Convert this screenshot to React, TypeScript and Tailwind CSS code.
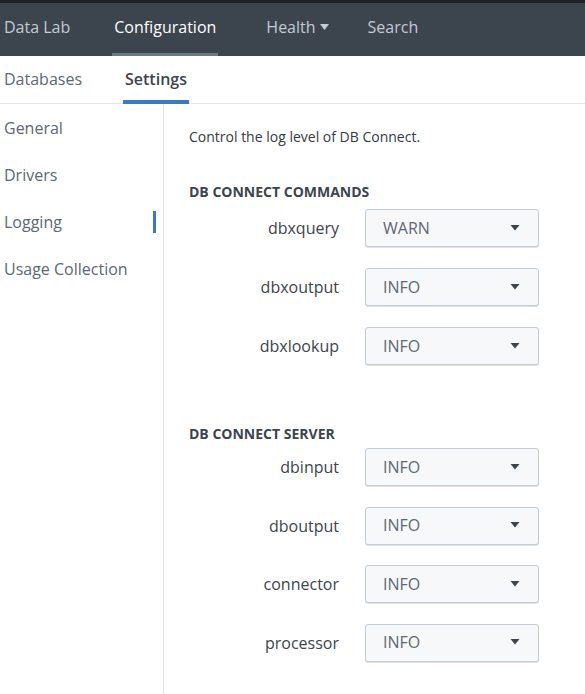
import { useState } from "react";

const commands = [
  { name: "dbxquery", level: "WARN" },
  { name: "dbxoutput", level: "INFO" },
  { name: "dbxlookup", level: "INFO" },
];

const server = [
  { name: "dbinput", level: "INFO" },
  { name: "dboutput", level: "INFO" },
  { name: "connector", level: "INFO" },
  { name: "processor", level: "INFO" },
];

function Caret() {
  return (
    <svg width="10" height="6" viewBox="0 0 10 6" className="fill-[#3c444d]">
      <path d="M0.5 0 L9.5 0 L5 5.5 Z" />
    </svg>
  );
}

function LevelRow({ name, level }: { name: string; level: string }) {
  const [value] = useState(level);
  return (
    <div className="flex items-center h-[38px]">
      <div className="w-[150px] text-right text-[16px] text-[#3c444d]">{name}</div>
      <button className="ml-[26px] w-[174px] h-[38px] flex items-center justify-between pl-[17px] pr-[18px] pb-[1px] bg-[#f7f8fa] border border-[#c3cbd4] rounded-[3px] shadow-[0_1px_0_#dfe3e8] text-[16px] text-[#5c6773]">
        <span>{value}</span>
        <Caret />
      </button>
    </div>
  );
}

export default function App() {
  const sideItems = ["General", "Drivers", "Logging", "Usage Collection"];

  return (
    <div className="w-[585px] h-[694px] overflow-hidden bg-white font-['Open_Sans',sans-serif]">
      <div className="h-[3px] bg-[#1f2328]" />
      <nav className="h-[53px] bg-[#3c444d] flex items-stretch text-[16px]">
        <div className="pl-[4px] pr-[44px] pb-[5px] flex items-center text-[#c3cbd4]">Data Lab</div>
        <div className="relative flex items-center pb-[5px] text-white">
          Configuration
          <span className="absolute left-[-2px] right-[-2px] bottom-0 h-[3px] bg-[#6b7880]" />
        </div>
        <div className="pl-[50px] pb-[5px] flex items-center gap-[4px] text-[#c3cbd4]">
          Health
          <svg width="9" height="6" viewBox="0 0 9 6" className="fill-[#c3cbd4]">
            <path d="M0 0 L9 0 L4.5 6 Z" />
          </svg>
        </div>
        <div className="pl-[39px] pb-[5px] flex items-center text-[#c3cbd4]">Search</div>
      </nav>

      <div className="h-[48px] flex items-stretch border-b border-[#e1e6eb] text-[16px]">
        <div className="pl-[4px] pb-[2px] flex items-center text-[#5c6773]">Databases</div>
        <div className="ml-[41px] relative flex items-center pb-[2px] px-[2px] font-semibold text-[#3c444d]">
          Settings
          <span className="absolute left-0 right-0 bottom-[-1px] h-[4px] bg-[#3a7bbf]" />
        </div>
      </div>

      <div className="flex h-[590px]">
        <aside className="w-[164px] border-r border-[#e1e6eb] shrink-0">
          {sideItems.map((item) => (
            <div key={item} className="relative h-[47px] flex items-center pl-[4px] text-[16px] text-[#5c6773]">
              {item}
              {item === "Logging" && (
                <span className="absolute right-[7px] top-[13px] w-[3px] h-[22px] bg-[#3a7bbf]" />
              )}
            </div>
          ))}
        </aside>

        <main className="pl-[25px] pt-[23px] flex-1">
          <p className="text-[14px] text-[#333a41] leading-[20px]">Control the log level of DB Connect.</p>

          <h3 className="mt-[35px] text-[14px] font-bold text-[#3c444d] uppercase leading-[20px]">DB Connect Commands</h3>
          <div className="mt-[7px] flex flex-col gap-[21px]">
            {commands.map((c) => (
              <LevelRow key={c.name} name={c.name} level={c.level} />
            ))}
          </div>

          <h3 className="mt-[59px] text-[14px] font-bold text-[#3c444d] uppercase leading-[20px]">DB Connect Server</h3>
          <div className="mt-[4px] flex flex-col gap-[20.6px]">
            {server.map((c) => (
              <LevelRow key={c.name} name={c.name} level={c.level} />
            ))}
          </div>
        </main>
      </div>
    </div>
  );
}
